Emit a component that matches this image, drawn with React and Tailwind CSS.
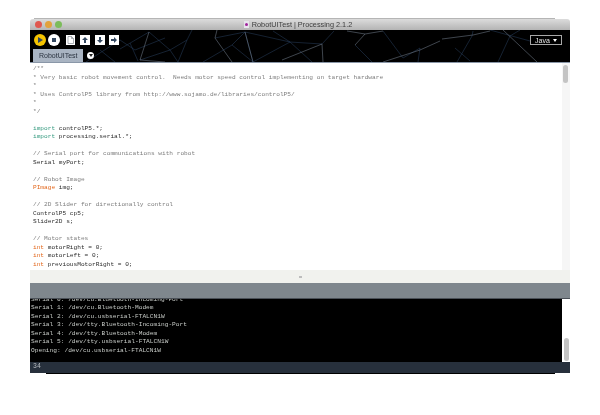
const code = [
  ["c", "/**"],
  ["c", "* Very basic robot movement control.  Needs motor speed control implementing on target hardware"],
  ["c", "*"],
  ["c", "* Uses ControlP5 library from http://www.sojamo.de/libraries/controlP5/"],
  ["c", "*"],
  ["c", "*/"],
  [],
  ["k", "import", " controlP5.*;"],
  ["k", "import", " processing.serial.*;"],
  [],
  ["c", "// Serial port for communications with robot"],
  ["p", "Serial myPort;"],
  [],
  ["c", "// Robot Image"],
  ["t", "PImage", " img;"],
  [],
  ["c", "// 2D Slider for directionally control"],
  ["p", "ControlP5 cp5;"],
  ["p", "Slider2D s;"],
  [],
  ["c", "// Motor states"],
  ["t", "int", " motorRight = 0;"],
  ["t", "int", " motorLeft = 0;"],
  ["t", "int", " previousMotorRight = 0;"],
  ["t", "int", " previousMotorLeft = 0;"],
];

const consoleLines = [
  "Serial 0: /dev/cu.Bluetooth-Incoming-Port",
  "Serial 1: /dev/cu.Bluetooth-Modem",
  "Serial 2: /dev/cu.usbserial-FTALCN1W",
  "Serial 3: /dev/tty.Bluetooth-Incoming-Port",
  "Serial 4: /dev/tty.Bluetooth-Modem",
  "Serial 5: /dev/tty.usbserial-FTALCN1W",
  "Opening: /dev/cu.usbserial-FTALCN1W",
];

const CodeLine = ({ line }) => {
  if (line.length === 0) return <div className="h-[8.5px]" />;
  const [kind, first, rest] = line;
  const color = {
    c: "text-[#7d7d7d]",
    k: "text-[#33997e]",
    t: "text-[#e2661a]",
    p: "text-[#2a2a2a]",
  }[kind];
  return (
    <div className="h-[8.5px] whitespace-pre">
      <span className={color}>{first}</span>
      {rest && <span className="text-[#2a2a2a]">{rest}</span>}
    </div>
  );
};

const Network = () => (
  <svg
    className="absolute inset-0 w-full h-full"
    viewBox="30 30 540 32"
    fill="none"
    strokeWidth="0.5"
  >
    <g stroke="#2b4262">
      <path d="M120 49L149 32L170 50L178 62" />
      <path d="M130 43L138 61M140 60L170 50L187 40L192 30M187 40L178 62" />
      <path d="M215 38L245 32L290 42L322 44L334 31" />
      <path d="M203 62L232 45L253 62M232 45L245 32L253 62" />
      <path d="M253 62L290 42M273 31L290 42L312 62" />
      <path d="M383 31L403 58L420 48L418 62M355 45L373 63M455 48L470 61" />
      <path d="M473 31L472 36L457 62M510 36L498 62M510 36L520 30M490 30L530 41" />
      <path d="M86 62L120 40L135 50L165 38M100 50L115 62" />
    </g>
    <g stroke="#7f8b9a">
      <path d="M149 32L140 60M215 38L232 62M215 38L217 30M245 32L253 62" />
      <path d="M282 60L322 44M322 44L323 62M140 60L165 62" />
      <path d="M347 31L365 34L383 31M365 34L355 45" />
      <path d="M383 62L420 50L440 41M442 39L473 35L490 31M503 30L537 62" />
    </g>
  </svg>
);

const ToolButton = ({ className, d }) => (
  <div className={`h-[10px] bg-white flex items-center justify-center ${className}`}>
    <svg viewBox="0 0 10 10" className="w-full h-full">
      <path d={d} fill="#33475f" />
    </svg>
  </div>
);

const App = () => {
  return (
    <div className="w-[600px] h-[415px] bg-white overflow-hidden pt-[18px] pl-[30px]">
      <div className="w-[540px] flex flex-col">
        <div className="h-px ml-[4px] mr-[15px] bg-[#b5b5b5]" />
        <div className="h-[11px] rounded-t-[3px] bg-gradient-to-b from-[#dcdcdc] to-[#b4b4b4] relative flex items-center justify-center">
          <div className="absolute left-[5px] top-[2px] flex gap-[3px]">
            <div className="w-[7px] h-[7px] rounded-full bg-[#e0584f]" />
            <div className="w-[7px] h-[7px] rounded-full bg-[#e2a23c]" />
            <div className="w-[7px] h-[7px] rounded-full bg-[#7cbc5a]" />
          </div>
          <div className="flex items-center gap-[3px] pr-[4px] blur-[0.25px]">
            <div className="w-[5px] h-[7px] bg-[#e8e4ee] flex items-center justify-center">
              <div className="w-[3px] h-[3px] rounded-full bg-[#a0249c]" />
            </div>
            <span className="text-[7.3px] leading-none text-[#3d3d3d] font-['Liberation_Sans',sans-serif]">
              RobotUITest | Processing 2.1.2
            </span>
          </div>
        </div>

        <div className="relative h-[33px] bg-black border-b border-[#8a97a8] overflow-hidden">
          <Network />
          <div className="relative flex flex-col">
            <div className="flex items-center pt-[4px] pl-[4px] pr-[8px] h-[16px]">
              <div className="w-[12px] h-[12px] rounded-full bg-[#f5c400] flex items-center justify-center">
                <svg viewBox="0 0 10 10" className="w-[10px] h-[10px]">
                  <path d="M3 2L8 5L3 8Z" fill="#33475f" />
                </svg>
              </div>
              <div className="w-[12px] h-[12px] ml-[2px] rounded-full bg-white flex items-center justify-center">
                <div className="w-[4px] h-[4px] bg-[#33475f]" />
              </div>
              <div className="w-[9px] h-[10px] ml-[6px] bg-white">
                <svg viewBox="0 0 9 10" className="w-full h-full" fill="none">
                  <path d="M2 1.5H5.5L7.5 3.5V8.5H2ZM5.5 1.5V3.5H7.5" stroke="#8a8f96" strokeWidth="0.7" />
                </svg>
              </div>
              <ToolButton className="w-[10px] ml-[5px]" d="M5 2L8 5H6V8H4V5H2Z" />
              <ToolButton className="w-[10px] ml-[5px]" d="M5 8L2 5H4V2H6V5H8Z" />
              <ToolButton className="w-[10px] ml-[4px]" d="M8 5L5 2V4H2V6H5V8Z" />
              <div className="ml-auto w-[32px] h-[10px] border border-[#a8a8a8] bg-black flex items-center justify-center gap-[3px] text-[7px] leading-none text-[#e8e8e8] font-['Liberation_Sans',sans-serif] blur-[0.2px]">
                Java
                <svg viewBox="0 0 4 3" className="w-[4px] h-[3px]">
                  <path d="M0 0H4L2 3Z" fill="#ffffff" />
                </svg>
              </div>
            </div>
            <div className="flex items-center pl-[3px] mt-[3px]">
              <div className="w-[50px] h-[13px] bg-[#a9b4c2] flex items-center pl-[6px] text-[7px] leading-none text-[#2a3340] font-['Liberation_Sans',sans-serif] blur-[0.2px]">
                RobotUITest
              </div>
              <div className="w-[7px] h-[7px] ml-[4px] rounded-full bg-white flex items-center justify-center">
                <svg viewBox="0 0 4 3" className="w-[4px] h-[3px]">
                  <path d="M0 0H4L2 3Z" fill="#222222" />
                </svg>
              </div>
            </div>
          </div>
        </div>

        <div className="flex h-[207px] bg-white">
          <div className="flex-1 pl-[3px] pt-[2px] overflow-hidden font-['Liberation_Mono',monospace] text-[6.15px] leading-[8.5px] blur-[0.35px]">
            {code.map((line, i) => (
              <CodeLine key={i} line={line} />
            ))}
          </div>
          <div className="w-[8px] bg-[#f6f6f6] pt-[2px] pl-px">
            <div className="w-[5px] h-[18px] rounded-full bg-[#c4c4c4]" />
          </div>
        </div>

        <div className="h-[13px] bg-[#f1f2ee] flex items-center justify-center">
          <div className="w-[3px] h-[2px] bg-[#bdbdbd]" />
        </div>
        <div className="h-[16px] bg-[#7f878d] border-b border-[#4a5057]" />

        <div className="flex h-[63px] bg-black">
          <div className="flex-1 flex flex-col justify-end pl-px pb-[7px] overflow-hidden font-['Liberation_Mono',monospace] text-[6.2px] leading-[8.45px] text-[#c8ccc8] blur-[0.35px]">
            {consoleLines.map((line) => (
              <div key={line} className="shrink-0 h-[8.45px] whitespace-pre">
                {line}
              </div>
            ))}
          </div>
          <div className="w-[8px] bg-white flex flex-col justify-end pb-px pl-[1.5px]">
            <div className="w-[5px] h-[23px] rounded-full bg-[#c4c4c4]" />
          </div>
        </div>

        <div className="h-[11px] bg-[#27303c] flex items-center pl-[3px] text-[6.5px] leading-none text-[#b8bcc0] font-['Liberation_Mono',monospace] blur-[0.2px]">
          34
        </div>
        <div className="h-px ml-[16px] mr-[15px] bg-black" />
      </div>
    </div>
  );
};

export default App;
